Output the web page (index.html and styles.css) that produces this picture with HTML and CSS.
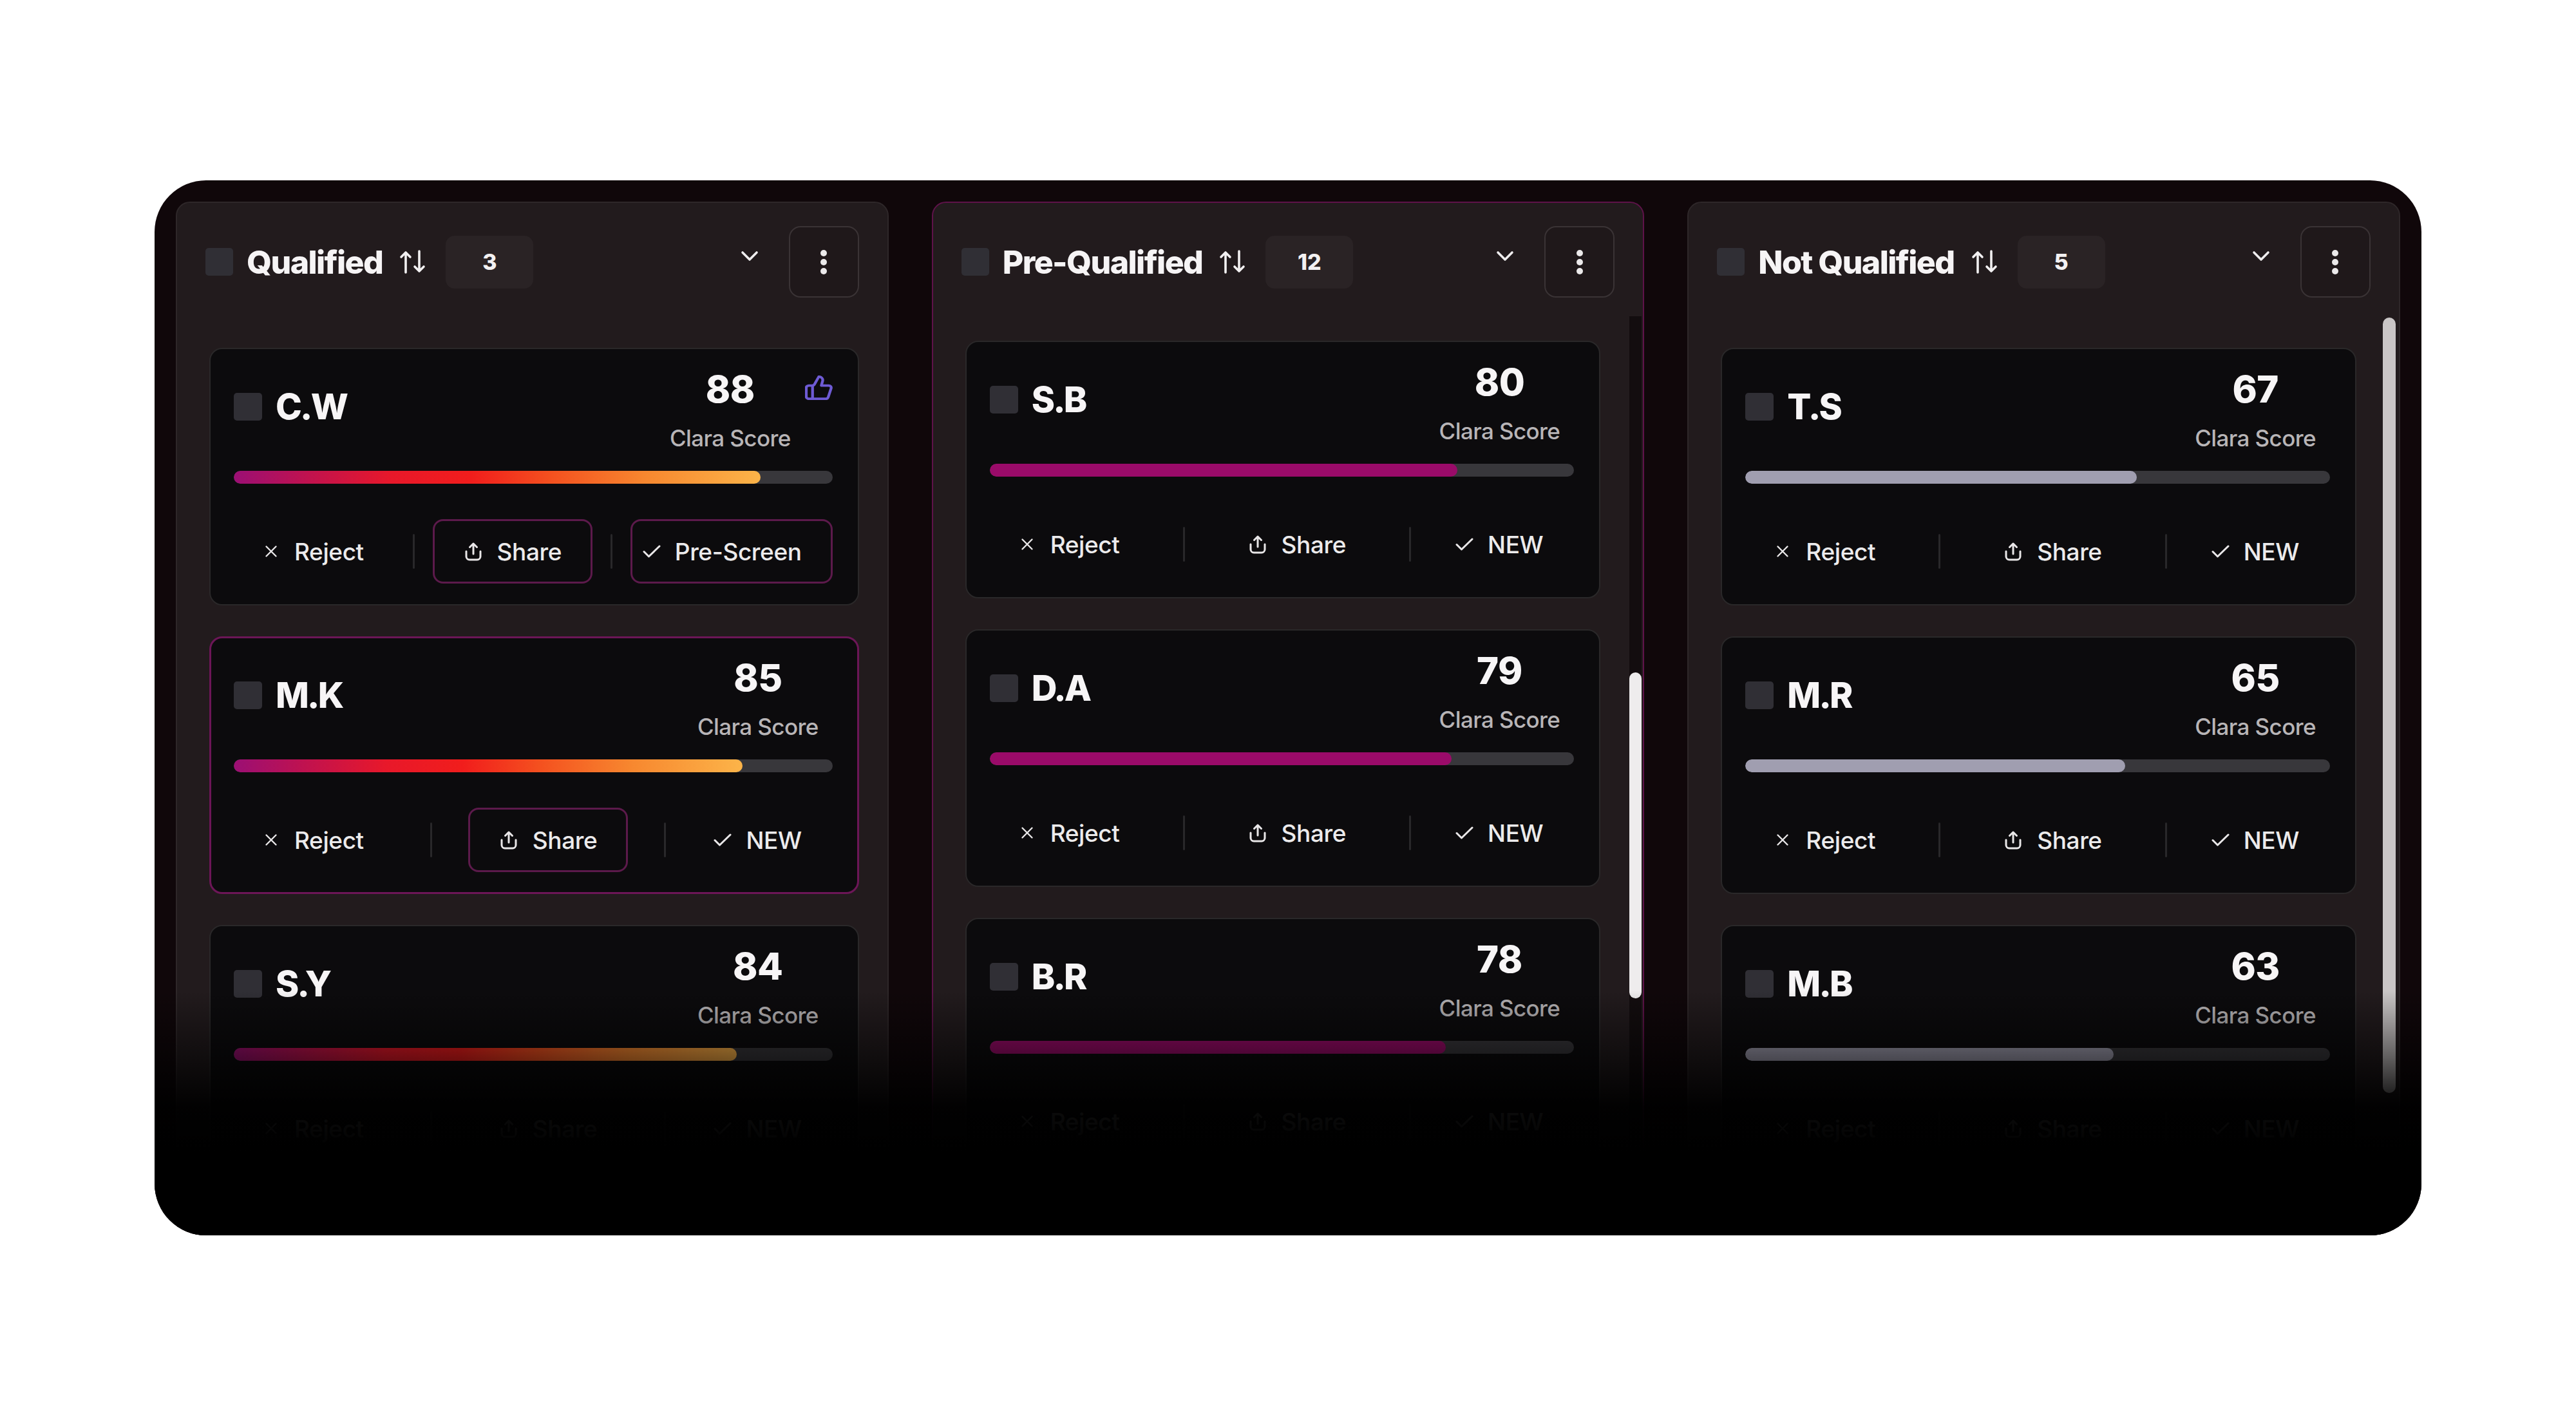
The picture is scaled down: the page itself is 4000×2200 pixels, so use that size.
FILE: index.html
```html
<!DOCTYPE html>
<html lang="en">
<head>
<meta charset="utf-8">
<title>Pipeline board</title>
<link rel="stylesheet" href="styles.css">
</head>
<body>
<div class="board">

  <section class="col">
    <header class="col-head">
      <span class="chk"></span>
      <h2 class="col-title">Qualified</h2>
      <svg class="sort" viewBox="0 0 42 37" width="42" height="37"><path d="M10 35V4M3 11l7-7 7 7M31 2v31M24 26l7 7 7-7"/></svg>
      <span class="count">3</span>
      <svg class="chev" viewBox="0 0 28 18" width="28" height="18"><path d="M3 3l11 11L25 3"/></svg>
      <button class="kebab"><span></span><span></span><span></span></button>
    </header>
    <div class="cards">
      <article class="card">
        <div class="card-top">
          <div class="who"><span class="chk"></span><h3 class="name">C.W</h3></div>
          <div class="score"><div class="num">88</div><div class="lbl">Clara Score</div></div>
          <svg class="thumb" viewBox="1 1 22 22" width="43" height="38" preserveAspectRatio="none"><path d="M7 10v12"/><path d="M15 5.88 14 10h5.83a2 2 0 0 1 1.92 2.56l-2.33 8A2 2 0 0 1 17.5 22H4a2 2 0 0 1-2-2v-8a2 2 0 0 1 2-2h2.76a2 2 0 0 0 1.79-1.11L12 2a3.13 3.13 0 0 1 3 3.88Z"/></svg>
        </div>
        <div class="track"><div class="fill fill-hot" style="width:88%"></div></div>
        <div class="actions">
          <button class="act"><svg class="ic-x" viewBox="0 0 20 20" width="20" height="20"><path d="M2.5 2.5l15 15M17.5 2.5l-15 15"/></svg>Reject</button>
          <span class="sep"></span>
          <button class="act act-outline"><svg class="ic-share" viewBox="0 0 30 30" width="30" height="30"><path d="M4 15v8a5 5 0 0 0 5 5h12a5 5 0 0 0 5-5v-8M15 19V3M9.5 8.5 15 3l5.5 5.5"/></svg>Share</button>
          <span class="sep"></span>
          <button class="act act-last act-outline"><svg class="ic-check" viewBox="0 0 28 20" width="28" height="20"><path d="M2 10.5l7.5 7.5L26 2"/></svg>Pre-Screen</button>
        </div>
      </article>

      <article class="card card-active">
        <div class="card-top">
          <div class="who"><span class="chk"></span><h3 class="name">M.K</h3></div>
          <div class="score"><div class="num">85</div><div class="lbl">Clara Score</div></div>
        </div>
        <div class="track"><div class="fill fill-hot" style="width:85%"></div></div>
        <div class="actions">
          <button class="act"><svg class="ic-x" viewBox="0 0 20 20" width="20" height="20"><path d="M2.5 2.5l15 15M17.5 2.5l-15 15"/></svg>Reject</button>
          <span class="sep"></span>
          <button class="act act-outline"><svg class="ic-share" viewBox="0 0 30 30" width="30" height="30"><path d="M4 15v8a5 5 0 0 0 5 5h12a5 5 0 0 0 5-5v-8M15 19V3M9.5 8.5 15 3l5.5 5.5"/></svg>Share</button>
          <span class="sep"></span>
          <button class="act act-last"><svg class="ic-check" viewBox="0 0 28 20" width="28" height="20"><path d="M2 10.5l7.5 7.5L26 2"/></svg>NEW</button>
        </div>
      </article>

      <article class="card">
        <div class="card-top">
          <div class="who"><span class="chk"></span><h3 class="name">S.Y</h3></div>
          <div class="score"><div class="num">84</div><div class="lbl">Clara Score</div></div>
        </div>
        <div class="track"><div class="fill fill-hot" style="width:84%"></div></div>
        <div class="actions">
          <button class="act"><svg class="ic-x" viewBox="0 0 20 20" width="20" height="20"><path d="M2.5 2.5l15 15M17.5 2.5l-15 15"/></svg>Reject</button>
          <span class="sep"></span>
          <button class="act"><svg class="ic-share" viewBox="0 0 30 30" width="30" height="30"><path d="M4 15v8a5 5 0 0 0 5 5h12a5 5 0 0 0 5-5v-8M15 19V3M9.5 8.5 15 3l5.5 5.5"/></svg>Share</button>
          <span class="sep"></span>
          <button class="act act-last"><svg class="ic-check" viewBox="0 0 28 20" width="28" height="20"><path d="M2 10.5l7.5 7.5L26 2"/></svg>NEW</button>
        </div>
      </article>
    </div>
  </section>

  <section class="col col-focus">
    <header class="col-head">
      <span class="chk"></span>
      <h2 class="col-title">Pre-Qualified</h2>
      <svg class="sort" viewBox="0 0 42 37" width="42" height="37"><path d="M10 35V4M3 11l7-7 7 7M31 2v31M24 26l7 7 7-7"/></svg>
      <span class="count">12</span>
      <svg class="chev" viewBox="0 0 28 18" width="28" height="18"><path d="M3 3l11 11L25 3"/></svg>
      <button class="kebab"><span></span><span></span><span></span></button>
    </header>
    <div class="cards cards-scroll cards-shift">
      <article class="card">
        <div class="card-top">
          <div class="who"><span class="chk"></span><h3 class="name">S.B</h3></div>
          <div class="score"><div class="num">80</div><div class="lbl">Clara Score</div></div>
        </div>
        <div class="track"><div class="fill fill-pink" style="width:80%"></div></div>
        <div class="actions">
          <button class="act"><svg class="ic-x" viewBox="0 0 20 20" width="20" height="20"><path d="M2.5 2.5l15 15M17.5 2.5l-15 15"/></svg>Reject</button>
          <span class="sep"></span>
          <button class="act"><svg class="ic-share" viewBox="0 0 30 30" width="30" height="30"><path d="M4 15v8a5 5 0 0 0 5 5h12a5 5 0 0 0 5-5v-8M15 19V3M9.5 8.5 15 3l5.5 5.5"/></svg>Share</button>
          <span class="sep"></span>
          <button class="act act-last"><svg class="ic-check" viewBox="0 0 28 20" width="28" height="20"><path d="M2 10.5l7.5 7.5L26 2"/></svg>NEW</button>
        </div>
      </article>

      <article class="card">
        <div class="card-top">
          <div class="who"><span class="chk"></span><h3 class="name">D.A</h3></div>
          <div class="score"><div class="num">79</div><div class="lbl">Clara Score</div></div>
        </div>
        <div class="track"><div class="fill fill-pink" style="width:79%"></div></div>
        <div class="actions">
          <button class="act"><svg class="ic-x" viewBox="0 0 20 20" width="20" height="20"><path d="M2.5 2.5l15 15M17.5 2.5l-15 15"/></svg>Reject</button>
          <span class="sep"></span>
          <button class="act"><svg class="ic-share" viewBox="0 0 30 30" width="30" height="30"><path d="M4 15v8a5 5 0 0 0 5 5h12a5 5 0 0 0 5-5v-8M15 19V3M9.5 8.5 15 3l5.5 5.5"/></svg>Share</button>
          <span class="sep"></span>
          <button class="act act-last"><svg class="ic-check" viewBox="0 0 28 20" width="28" height="20"><path d="M2 10.5l7.5 7.5L26 2"/></svg>NEW</button>
        </div>
      </article>

      <article class="card">
        <div class="card-top">
          <div class="who"><span class="chk"></span><h3 class="name">B.R</h3></div>
          <div class="score"><div class="num">78</div><div class="lbl">Clara Score</div></div>
        </div>
        <div class="track"><div class="fill fill-pink" style="width:78%"></div></div>
        <div class="actions">
          <button class="act"><svg class="ic-x" viewBox="0 0 20 20" width="20" height="20"><path d="M2.5 2.5l15 15M17.5 2.5l-15 15"/></svg>Reject</button>
          <span class="sep"></span>
          <button class="act"><svg class="ic-share" viewBox="0 0 30 30" width="30" height="30"><path d="M4 15v8a5 5 0 0 0 5 5h12a5 5 0 0 0 5-5v-8M15 19V3M9.5 8.5 15 3l5.5 5.5"/></svg>Share</button>
          <span class="sep"></span>
          <button class="act act-last"><svg class="ic-check" viewBox="0 0 28 20" width="28" height="20"><path d="M2 10.5l7.5 7.5L26 2"/></svg>NEW</button>
        </div>
      </article>
    </div>
    <div class="sb-track"></div>
    <div class="sb-thumb sb-thumb-2"></div>
  </section>

  <section class="col">
    <header class="col-head">
      <span class="chk"></span>
      <h2 class="col-title">Not Qualified</h2>
      <svg class="sort" viewBox="0 0 42 37" width="42" height="37"><path d="M10 35V4M3 11l7-7 7 7M31 2v31M24 26l7 7 7-7"/></svg>
      <span class="count">5</span>
      <svg class="chev" viewBox="0 0 28 18" width="28" height="18"><path d="M3 3l11 11L25 3"/></svg>
      <button class="kebab"><span></span><span></span><span></span></button>
    </header>
    <div class="cards cards-scroll">
      <article class="card">
        <div class="card-top">
          <div class="who"><span class="chk"></span><h3 class="name">T.S</h3></div>
          <div class="score"><div class="num">67</div><div class="lbl">Clara Score</div></div>
        </div>
        <div class="track"><div class="fill fill-gray" style="width:67%"></div></div>
        <div class="actions">
          <button class="act"><svg class="ic-x" viewBox="0 0 20 20" width="20" height="20"><path d="M2.5 2.5l15 15M17.5 2.5l-15 15"/></svg>Reject</button>
          <span class="sep"></span>
          <button class="act"><svg class="ic-share" viewBox="0 0 30 30" width="30" height="30"><path d="M4 15v8a5 5 0 0 0 5 5h12a5 5 0 0 0 5-5v-8M15 19V3M9.5 8.5 15 3l5.5 5.5"/></svg>Share</button>
          <span class="sep"></span>
          <button class="act act-last"><svg class="ic-check" viewBox="0 0 28 20" width="28" height="20"><path d="M2 10.5l7.5 7.5L26 2"/></svg>NEW</button>
        </div>
      </article>

      <article class="card">
        <div class="card-top">
          <div class="who"><span class="chk"></span><h3 class="name">M.R</h3></div>
          <div class="score"><div class="num">65</div><div class="lbl">Clara Score</div></div>
        </div>
        <div class="track"><div class="fill fill-gray" style="width:65%"></div></div>
        <div class="actions">
          <button class="act"><svg class="ic-x" viewBox="0 0 20 20" width="20" height="20"><path d="M2.5 2.5l15 15M17.5 2.5l-15 15"/></svg>Reject</button>
          <span class="sep"></span>
          <button class="act"><svg class="ic-share" viewBox="0 0 30 30" width="30" height="30"><path d="M4 15v8a5 5 0 0 0 5 5h12a5 5 0 0 0 5-5v-8M15 19V3M9.5 8.5 15 3l5.5 5.5"/></svg>Share</button>
          <span class="sep"></span>
          <button class="act act-last"><svg class="ic-check" viewBox="0 0 28 20" width="28" height="20"><path d="M2 10.5l7.5 7.5L26 2"/></svg>NEW</button>
        </div>
      </article>

      <article class="card">
        <div class="card-top">
          <div class="who"><span class="chk"></span><h3 class="name">M.B</h3></div>
          <div class="score"><div class="num">63</div><div class="lbl">Clara Score</div></div>
        </div>
        <div class="track"><div class="fill fill-gray" style="width:63%"></div></div>
        <div class="actions">
          <button class="act"><svg class="ic-x" viewBox="0 0 20 20" width="20" height="20"><path d="M2.5 2.5l15 15M17.5 2.5l-15 15"/></svg>Reject</button>
          <span class="sep"></span>
          <button class="act"><svg class="ic-share" viewBox="0 0 30 30" width="30" height="30"><path d="M4 15v8a5 5 0 0 0 5 5h12a5 5 0 0 0 5-5v-8M15 19V3M9.5 8.5 15 3l5.5 5.5"/></svg>Share</button>
          <span class="sep"></span>
          <button class="act act-last"><svg class="ic-check" viewBox="0 0 28 20" width="28" height="20"><path d="M2 10.5l7.5 7.5L26 2"/></svg>NEW</button>
        </div>
      </article>
    </div>
    <div class="sb-thumb sb-thumb-3"></div>
  </section>

  <div class="fade"></div>
</div>
</body>
</html>
```

FILE: styles.css
```css
* { box-sizing: border-box; }

html, body {
  margin: 0;
  background: #ffffff;
}

body {
  width: 4000px;
  height: 2200px;
  font-family: "Inter", "Liberation Sans", sans-serif;
  color: #f3f1f2;
}

.board {
  position: relative;
  margin: 280px 0 0 240px;
  width: 3520px;
  height: 1638px;
  padding: 33px 33px 0;
  border-radius: 80px;
  background: #10070a;
  overflow: hidden;
  display: grid;
  grid-template-columns: repeat(3, 1fr);
  column-gap: 67px;
}

/* ---------- columns ---------- */
.col {
  position: relative;
  background: #221b1d;
  border: 2px solid #2e2729;
  border-radius: 22px;
  padding: 36px 44px 0 44px;
  overflow: hidden;
  min-width: 0;
}

.col-focus {
  border-color: #5e1249;
}

.col-head {
  display: flex;
  align-items: center;
  height: 111px;
}

.chk {
  flex: none;
  width: 43px;
  height: 43px;
  border-radius: 5px;
  background: #302f35;
}

.col-title {
  margin: 0 0 0 21px;
  font-size: 50px;
  line-height: 60px;
  font-weight: 800;
  letter-spacing: -1.6px;
  color: #f6f4f5;
}

.sort {
  flex: none;
  margin-left: 26px;
  fill: none;
  stroke: #f2f0f1;
  stroke-width: 3.6;
  stroke-linecap: round;
  stroke-linejoin: round;
}

.count {
  flex: none;
  margin-left: 30px;
  width: 136px;
  height: 82px;
  border-radius: 14px;
  background: #2a2325;
  display: flex;
  align-items: center;
  justify-content: center;
  font-size: 34px;
  font-weight: 800;
  color: #f3f1f2;
}

.chev {
  flex: none;
  margin-left: auto;
  margin-bottom: 18px;
  fill: none;
  stroke: #efedee;
  stroke-width: 3.6;
  stroke-linecap: round;
  stroke-linejoin: round;
}

.kebab {
  flex: none;
  margin-left: 47px;
  width: 109px;
  height: 111px;
  border: 2px solid #3a3335;
  border-radius: 18px;
  background: #1f181a;
  display: flex;
  flex-direction: column;
  align-items: center;
  justify-content: center;
  gap: 4px;
  padding: 0;
}

.kebab span {
  width: 10px;
  height: 10px;
  border-radius: 50%;
  background: #ebe9ea;
}

/* ---------- cards ---------- */
.cards {
  margin-top: 78px;
  margin-left: 6px;
  display: flex;
  flex-direction: column;
  gap: 48px;
}

.cards-scroll {
  margin-right: 22px;
}

.cards-shift {
  margin-top: 67px;
}

.card {
  height: 400px;
  flex: none;
  background: #0c0b0d;
  border: 2px solid #2a2829;
  border-radius: 20px;
  padding: 33px 39px 32px 36px;
  display: flex;
  flex-direction: column;
}

.card-active {
  border: 3px solid #6c1657;
  padding: 32px 38px 31px 35px;
}

.card-top {
  display: flex;
  align-items: flex-start;
  height: 127px;
}

.who {
  flex: 1;
  display: flex;
  align-items: center;
  gap: 21px;
  margin-top: 29px;
}

.who .chk {
  width: 44px;
  height: 43px;
}

.name {
  margin: 0;
  font-size: 55px;
  line-height: 54px;
  font-weight: 800;
  letter-spacing: -2.8px;
  color: #f7f5f6;
}

.score {
  margin-right: 22px;
  text-align: center;
}

.num {
  font-size: 58px;
  line-height: 58px;
  font-weight: 800;
  letter-spacing: -0.5px;
  color: #f7f5f6;
}

.lbl {
  margin-top: 25px;
  font-size: 35px;
  line-height: 44px;
  font-weight: 500;
  letter-spacing: -0.6px;
  color: #b8b5b7;
  white-space: nowrap;
}

.thumb {
  flex: none;
  margin-top: 8px;
  fill: none;
  stroke: #6e5bd4;
  stroke-width: 2.2;
  stroke-linecap: round;
  stroke-linejoin: round;
}

.track {
  margin-top: 29px;
  height: 22px;
  border-radius: 11px;
  background: #38373b;
  overflow: hidden;
}

.fill {
  height: 100%;
  border-radius: 11px;
}

.fill-hot {
  background: linear-gradient(90deg, #9b0f74 0%, #c0124f 14%, #e8182a 30%, #f11d1c 45%, #f4501f 60%, #f7872f 78%, #fcb449 100%);
}

.fill-pink {
  background: #9a0b69;
}

.fill-gray {
  background: #a09eb0;
}

/* ---------- actions ---------- */
.actions {
  margin-top: 55px;
  display: flex;
  align-items: center;
  justify-content: space-between;
  height: 100px;
}

.act {
  flex: none;
  height: 100px;
  display: flex;
  align-items: center;
  padding: 0 45px;
  border: 3px solid transparent;
  border-radius: 16px;
  background: transparent;
  font-family: "Inter", "Liberation Sans", sans-serif;
  font-size: 37px;
  font-weight: 500;
  letter-spacing: -0.4px;
  color: #ecebec;
  white-space: nowrap;
}

.act-last {
  padding-left: 16px;
}

.act-outline {
  border-color: #5c1a4b;
}

.act svg {
  flex: none;
  fill: none;
  stroke: #e9e7e8;
  stroke-linecap: round;
  stroke-linejoin: round;
}

.ic-x {
  stroke-width: 2.4;
  margin-right: 26px;
}

.ic-share {
  stroke-width: 3;
  margin-right: 22px;
  stroke: #d8d6d7;
}

.ic-check {
  stroke-width: 3;
  margin-right: 22px;
}

.sep {
  flex: none;
  width: 3px;
  height: 54px;
  background: #29282a;
  border-radius: 2px;
}

/* ---------- scrollbars (overlaying the column) ---------- */
.sb-track {
  position: absolute;
  right: 2px;
  top: 176px;
  bottom: 0;
  width: 19px;
  background: #130d0f;
}

.sb-thumb {
  position: absolute;
  width: 19px;
  border-radius: 10px;
}

.sb-thumb-2 {
  right: 2px;
  top: 729px;
  height: 506px;
  background: #eeeced;
}

.sb-thumb-3 {
  right: 5px;
  top: 178px;
  height: 1204px;
  width: 20px;
  background: #cac6c6;
}

/* ---------- bottom fade ---------- */
.fade {
  position: absolute;
  left: 0;
  right: 0;
  bottom: 0;
  height: 380px;
  pointer-events: none;
  background: linear-gradient(to bottom,
    rgba(0, 0, 0, 0) 0px,
    rgba(0, 0, 0, 0.5) 100px,
    rgba(0, 0, 0, 0.95) 180px,
    #000 250px);
}
```
